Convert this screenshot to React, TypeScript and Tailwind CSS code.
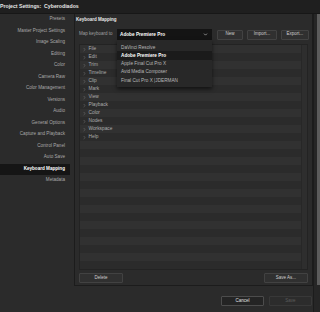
import { ChevronDown, ChevronRight } from 'lucide-react'

const SECTIONS = [
  'Presets',
  'Master Project Settings',
  'Image Scaling',
  'Editing',
  'Color',
  'Camera Raw',
  'Color Management',
  'Versions',
  'Audio',
  'General Options',
  'Capture and Playback',
  'Control Panel',
  'Auto Save',
  'Keyboard Mapping',
  'Metadata',
]

const MENU_GROUPS = [
  'File',
  'Edit',
  'Trim',
  'Timeline',
  'Clip',
  'Mark',
  'View',
  'Playback',
  'Color',
  'Nodes',
  'Workspace',
  'Help',
]

const PRESETS = [
  'DaVinci Resolve',
  'Adobe Premiere Pro',
  'Apple Final Cut Pro X',
  'Avid Media Composer',
  'Final Cut Pro X |JDERMAN',
]

const ROW_COUNT = 28

function SmallButton({ label, className = '', disabled = false }: { label: string; className?: string; disabled?: boolean }) {
  return (
    <div
      className={`h-[10px] flex items-center justify-center rounded-[1px] border text-[4.5px] ${
        disabled ? 'text-[#5c5c5c] border-[#383838] bg-[#2c2c2c]' : 'text-[#cfcfcf] border-[#424242] bg-[#303030]'
      } ${className}`}
    >
      {label}
    </div>
  )
}

export default function App() {
  const selected = 'Keyboard Mapping'

  return (
    <div className="w-[320px] h-[312px] overflow-hidden bg-[#2b2b2b] flex flex-col font-['Liberation_Sans',Arial,sans-serif] select-none">
      {/* title bar */}
      <div className="h-[14px] shrink-0 bg-[#1f1f1f] border-b border-[#171717] flex items-center text-[5.2px] font-bold text-[#e6e6e6]">
        Project Settings:&nbsp; Cyberodiados
      </div>

      <div className="flex-1 flex min-h-0">
        {/* sidebar */}
        <div className="w-[74px] shrink-0 flex flex-col">
          {SECTIONS.map((s) => (
            <div
              key={s}
              className={`h-[11.5px] w-[70px] flex items-center justify-end pr-[5px] text-[4.6px] ${
                s === selected ? 'bg-[#151515] text-white font-bold' : 'text-[#a8a8a8]'
              }`}
            >
              {s}
            </div>
          ))}
        </div>

        {/* main */}
        <div className="w-[239px] shrink-0 flex flex-col">
          <div className="h-[272px] shrink-0 border border-t-0 border-[#1c1c1c] bg-[#2b2b2b] flex flex-col">
            <div className="h-[12px] shrink-0 flex items-center pl-[1px] text-[4.5px] font-bold text-[#e8e8e8]">
              Keyboard Mapping
            </div>

            <div className="h-[17px] shrink-0 flex items-center pl-[4px] pr-[3px]">
              <span className="w-[38px] text-[4.5px] text-[#a0a0a0]">Map keyboard to</span>
              <div className="relative w-[95px] h-[11px]">
                <div className="h-full bg-[#141414] flex items-center justify-between pl-[3px] pr-[4px] text-[4.7px] font-bold text-white">
                  Adobe Premiere Pro
                  <ChevronDown size={5} strokeWidth={3} className="text-[#cfcfcf]" />
                </div>
                <div className="absolute left-0 top-full w-[95px] z-10 bg-[#282828] py-[3px] shadow-[0_2px_4px_rgba(0,0,0,0.6)]">
                  {PRESETS.map((p, i) => (
                    <div
                      key={p}
                      className={`h-[8.25px] flex items-center pl-[4px] text-[4.7px] ${
                        i === 1 ? 'bg-[#1b1b1b] text-white font-bold' : 'text-[#b8b8b8]'
                      }`}
                    >
                      {p}
                    </div>
                  ))}
                </div>
              </div>
              <div className="flex-1" />
              <SmallButton label="New" className="w-[26px]" />
              <SmallButton label="Import..." className="w-[30px] ml-[4px]" />
              <SmallButton label="Export..." className="w-[28px] ml-[4px]" />
            </div>

            {/* command tree */}
            <div className="mx-[4px] mt-[1px] h-[226px] shrink-0 border border-[#232323] flex overflow-hidden">
              <div className="flex-1 flex flex-col">
                {Array.from({ length: ROW_COUNT }).map((_, i) => {
                  const label = MENU_GROUPS[i]
                  return (
                    <div
                      key={i}
                      className={`h-[8px] shrink-0 flex items-center pl-[2px] text-[4.8px] text-[#acacac] ${
                        i % 2 === 0 ? 'bg-[#313131]' : 'bg-[#2b2b2b]'
                      }`}
                    >
                      {label && (
                        <>
                          <ChevronRight size={5} strokeWidth={2} className="text-[#8c8c8c] mr-[1.5px]" />
                          {label}
                        </>
                      )}
                    </div>
                  )
                })}
              </div>
              <div className="w-[6px] bg-[#2e2e2e] border-l border-[#272727]" />
            </div>

            <div className="flex items-center justify-between px-[4px] mt-[3px]">
              <SmallButton label="Delete" className="w-[44px]" />
              <SmallButton label="Save As..." className="w-[44px]" />
            </div>
          </div>

          {/* footer */}
          <div className="flex-1 flex items-start justify-end gap-[5px] pt-[10px] pr-[1px]">
            <SmallButton label="Cancel" className="w-[43px] !bg-[#242424] !border-[#4c4c4c] text-[#e0e0e0]" />
            <SmallButton label="Save" className="w-[43px]" disabled />
          </div>
        </div>

        {/* window scrollbar */}
        <div className="flex-1 flex justify-end bg-[#262626] border-l border-[#1c1c1c]">
          <div className="w-[3px] h-[271px] bg-[#5c5c5c]" />
        </div>
      </div>
    </div>
  )
}
